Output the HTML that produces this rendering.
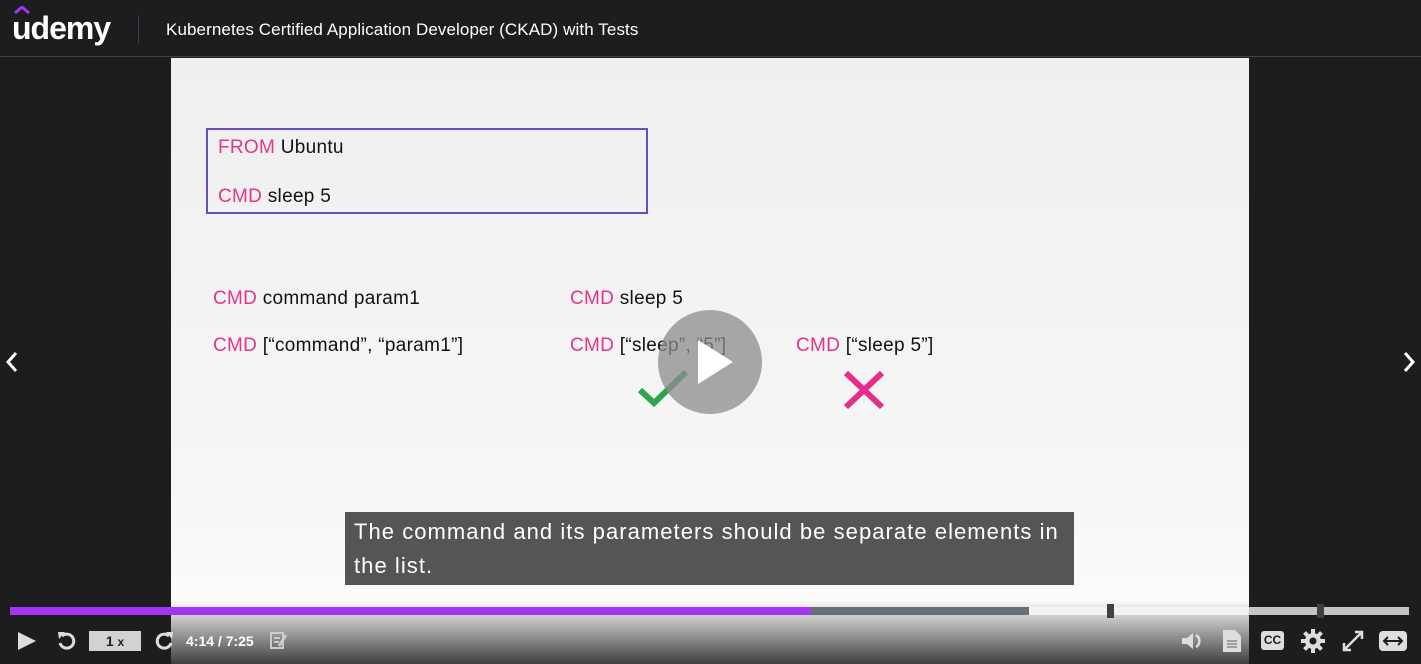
<!DOCTYPE html>
<html><head><style>
*{margin:0;padding:0;box-sizing:border-box}
body{width:1421px;height:664px;background:#1c1d1f;position:relative;overflow:hidden;font-family:"Liberation Sans",sans-serif}
.hdr{position:absolute;left:0;top:0;width:1421px;height:57px;background:#1c1d1f;border-bottom:1px solid #3e4143}
.logo{position:absolute;left:12px;top:8px;color:#fff;font-size:32px;font-weight:bold;letter-spacing:-1px}
.sep{position:absolute;left:138px;top:15px;width:1px;height:28px;background:#3e4143}
.title{position:absolute;left:166px;top:20px;color:#fff;font-size:17px;letter-spacing:0.1px}
.slide{position:absolute;left:171px;top:58px;width:1078px;height:606px;background:linear-gradient(#efefef,#f6f6f6 70%,#fff)}
.t{position:absolute;font-size:19px;color:#111;white-space:nowrap;letter-spacing:0.3px;top:0}
.p{color:#e3358a}
.box{position:absolute;left:206px;top:128px;width:442px;height:86px;border:2px solid #6b4fb8}
.sub{position:absolute;left:345px;top:512px;width:729px;height:73px;background:rgba(70,70,72,.92);color:#fff;font-size:22px;line-height:34px;padding:3px 9px;letter-spacing:1.05px;white-space:nowrap}
.shade{position:absolute;left:171px;top:600px;width:1078px;height:64px;background:linear-gradient(rgba(28,29,31,0),rgba(28,29,31,.85))}
.bar{position:absolute;top:607px;height:8px}
</style></head><body>
<div class="hdr"><div class="logo">
<svg style="position:absolute;left:2px;top:-2px" width="16" height="8"><path d="M1 7 L8 1 L15 7" stroke="#a435f0" stroke-width="3" fill="none"/></svg>
<span style="position:relative;top:2px">udemy</span></div>
<div class="sep"></div><div class="title">Kubernetes Certified Application Developer (CKAD) with Tests</div></div>
<div class="slide"></div>
<div class="box"></div>
<div class="t" style="left:218px;top:137px"><span class="p">FROM</span> Ubuntu</div>
<div class="t" style="left:218px;top:186px"><span class="p">CMD</span> sleep 5</div>
<div class="t" style="left:213px;top:288px"><span class="p">CMD</span> command param1</div>
<div class="t" style="left:213px;top:335px"><span class="p">CMD</span> [“command”, “param1”]</div>
<div class="t" style="left:570px;top:288px"><span class="p">CMD</span> sleep 5</div>
<div class="t" style="left:570px;top:335px"><span class="p">CMD</span> [“sleep”, “5”]</div>
<div class="t" style="left:796px;top:335px"><span class="p">CMD</span> [“sleep 5”]</div>
<svg style="position:absolute;left:636px;top:368px" width="56" height="40"><path d="M4 22 L18 35 L50 4" stroke="#2ea44f" stroke-width="6" fill="none"/></svg>
<svg style="position:absolute;left:842px;top:369px" width="44" height="42"><path d="M4 4 L40 38 M40 4 L4 38" stroke="#e52e8a" stroke-width="6"/></svg>
<svg style="position:absolute;left:658px;top:310px" width="104" height="104"><circle cx="52" cy="52" r="52" fill="rgba(140,140,140,.75)"/><path d="M40 30 L40 74 L75 52Z" fill="#fff"/></svg>
<svg style="position:absolute;left:4px;top:350px" width="16" height="24"><path d="M12 3 L4 12 L12 21" stroke="#fff" stroke-width="3" fill="none"/></svg>
<svg style="position:absolute;left:1401px;top:350px" width="16" height="24"><path d="M4 3 L12 12 L4 21" stroke="#fff" stroke-width="3" fill="none"/></svg>
<div class="sub">The command and its parameters should be separate elements in<br>the list.</div>
<div class="shade"></div>
<div class="bar" style="left:10px;width:801px;background:#a435f0"></div>
<div class="bar" style="left:811px;width:218px;background:#6a6f73"></div>
<div class="bar" style="left:1029px;width:220px;background:#f2f2f2"></div>
<div class="bar" style="left:1249px;width:160px;background:#c4c4c4"></div>
<div class="bar" style="left:1107px;top:604px;width:7px;height:14px;background:#3e4143"></div>
<div class="bar" style="left:1317px;top:604px;width:7px;height:14px;background:#3e4143"></div>
<svg style="position:absolute;left:17px;top:631px" width="20" height="20"><path d="M1 1 L1 19 L19 10Z" fill="#ddd"/></svg>
<svg style="position:absolute;left:56px;top:630px" width="22" height="22"><path d="M6 6 A7 7 0 1 1 4 13" stroke="#ddd" stroke-width="3" fill="none"/><path d="M2 2 L9 2 L3 9Z" fill="#ddd"/></svg>
<div style="position:absolute;left:89px;top:631px;width:52px;height:20px;background:#d1d2d4;color:#1c1d1f;font-size:14px;font-weight:bold;text-align:center;line-height:20px">1 <small>x</small></div>
<svg style="position:absolute;left:153px;top:630px" width="22" height="22"><path d="M16 6 A7 7 0 1 0 18 13" stroke="#ddd" stroke-width="3" fill="none"/><path d="M20 2 L13 2 L19 9Z" fill="#ddd"/></svg>
<div style="position:absolute;left:186px;top:633px;color:#fff;font-size:14px;font-weight:bold">4:14 / 7:25</div>
<svg style="position:absolute;left:270px;top:632px" width="18" height="18"><rect x="1" y="1" width="12" height="15" fill="none" stroke="#ccc" stroke-width="2"/><path d="M4 6h6M4 10h5" stroke="#ccc" stroke-width="2"/><path d="M16 3 L9 14" stroke="#ccc" stroke-width="3"/></svg>
<svg style="position:absolute;left:1180px;top:630px" width="24" height="22"><path d="M2 8h5l6-5v16l-6-5H2z" fill="#ddd"/><path d="M16 5a7 7 0 0 1 0 12" stroke="#ddd" stroke-width="2.5" fill="none"/></svg>
<svg style="position:absolute;left:1222px;top:629px" width="20" height="24"><path d="M1 1h12l6 6v16H1z" fill="#ddd"/><path d="M5 12h10M5 15h10M5 18h10" stroke="#888" stroke-width="1.5"/></svg>
<div style="position:absolute;left:1261px;top:631px;width:23px;height:19px;background:#ddd;border-radius:3px;color:#1c1d1f;font-size:12px;font-weight:bold;text-align:center;line-height:19px">CC</div>
<svg style="position:absolute;left:1301px;top:629px" width="24" height="24"><g fill="#ddd"><circle cx="12" cy="12" r="8"/><rect x="10" y="0" width="4" height="24"/><rect x="0" y="10" width="24" height="4"/><rect x="10" y="0" width="4" height="24" transform="rotate(45 12 12)"/><rect x="10" y="0" width="4" height="24" transform="rotate(-45 12 12)"/></g><circle cx="12" cy="12" r="3.5" fill="#1c1d1f"/></svg>
<svg style="position:absolute;left:1341px;top:629px" width="24" height="24"><path d="M3 21L21 3M14 3h7v7M3 14v7h7" stroke="#ddd" stroke-width="2.5" fill="none"/></svg>
<svg style="position:absolute;left:1379px;top:631px" width="28" height="20"><rect x="0" y="0" width="28" height="20" rx="4" fill="#ddd"/><path d="M5 10h18M9 6l-4 4 4 4M19 6l4 4-4 4" stroke="#1c1d1f" stroke-width="2" fill="none"/></svg>
</body></html>
